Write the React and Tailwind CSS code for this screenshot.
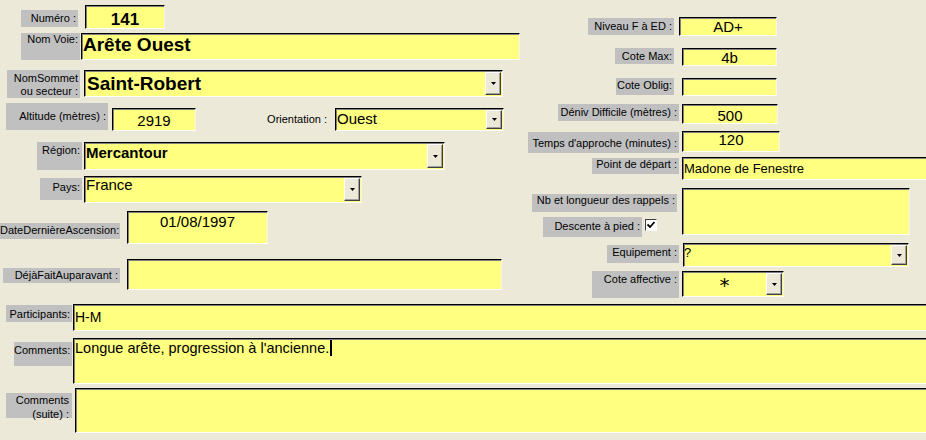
import React from 'react';

function Label({ className = '', children }) {
  return (
    <div className={`shrink-0 bg-[#c0c0c0] text-[11px] leading-[13px] text-right pr-[2px] whitespace-nowrap ${className}`}>
      {children}
    </div>
  );
}

function DropBtn() {
  return (
    <div className="shrink-0 w-[16px] self-stretch my-[1px] mr-[1px] flex items-center justify-center bg-[#ece9d8] border-t border-l border-t-white border-l-white border-b border-r border-b-[#404040] border-r-[#404040] shadow-[inset_-1px_-1px_0_#a0a0a0]">
      <svg width="5" height="3" viewBox="0 0 5 3">
        <path d="M0 0h5L2.5 3z" fill="#000" />
      </svg>
    </div>
  );
}

function Field({ className = '', text = '', combo = false, children }) {
  return (
    <div className={`shrink-0 flex bg-[#ffff80] border-t border-l border-t-black border-l-black border-b border-r border-b-white border-r-[#f4f4f4] shadow-[inset_1px_1px_0_#808080] overflow-hidden ${className}`}>
      <div className={`flex-1 min-w-0 whitespace-nowrap leading-none ${text}`}>{children}</div>
      {combo && <DropBtn />}
    </div>
  );
}

export default function App() {
  return (
    <div className="w-[926px] h-[440px] overflow-hidden bg-[#ece9d8] text-black font-['Liberation_Sans',Arial,sans-serif]">
      <div className="flex h-[300px]">
        {/* left column */}
        <div className="w-[520px] shrink-0 flex flex-col pt-[5px]">
          <div className="flex items-start h-[28px]">
            <Label className="ml-[21px] mt-[5px] w-[57px] h-[17px] pt-[2px]">Numéro :</Label>
            <Field className="ml-[7px] w-[80px] h-[24px]" text="text-center font-bold text-[17px] pt-[5px]">141</Field>
          </div>
          <div className="flex items-start h-[37px]">
            <Label className="ml-[21px] w-[59px] h-[27px] pt-0">Nom Voie:</Label>
            <Field className="ml-[1px] w-[439px] h-[27px]" text="font-bold text-[19px] pt-[1px] pl-[1px]">Arête Ouest</Field>
          </div>
          <div className="flex items-start h-[33px]">
            <Label className="ml-[7px] w-[73px] h-[28px] pt-[2px] leading-[12px]">
              NomSommet
              <br />
              ou secteur :
            </Label>
            <Field combo className="ml-[4px] w-[419px] h-[27px]" text="font-bold text-[19px] pt-[3px] pl-[2px]">Saint-Robert</Field>
          </div>
          <div className="flex items-start h-[39px]">
            <Label className="ml-[6px] w-[102px] h-[27px] pt-[7px]">Altitude (mètres) :</Label>
            <Field className="ml-[4px] mt-[5px] w-[84px] h-[23px]" text="text-center text-[15px] pt-[4px]">2919</Field>
            <div className="mt-[5px] w-[139px] h-[23px] flex items-center justify-end pr-[8px] text-[11px] whitespace-nowrap">Orientation :</div>
            <Field combo className="mt-[5px] w-[169px] h-[23px]" text="text-[15px] pt-[2px] pl-[1px]">Ouest</Field>
          </div>
          <div className="flex items-start h-[34px]">
            <Label className="ml-[37px] w-[45px] h-[28px] pt-[2px]">Région:</Label>
            <Field combo className="ml-[2px] w-[361px] h-[28px]" text="font-bold text-[15px] pt-[2px] pl-[1px]">Mercantour</Field>
          </div>
          <div className="flex items-start h-[35px]">
            <Label className="ml-[40px] mt-[2px] w-[42px] h-[22px] pt-[3px]">Pays:</Label>
            <Field combo className="ml-[2px] w-[278px] h-[27px]" text="text-[15px] pt-0 pl-[1px]">France</Field>
          </div>
          <div className="flex items-start h-[48px]">
            <Label className="mt-[12px] w-[120px] h-[16px] pt-[1px]">DateDernièreAscension:</Label>
            <Field className="ml-[7px] w-[141px] h-[33px]" text="text-center text-[15px] pt-[2px]">01/08/1997</Field>
          </div>
          <div className="flex items-start h-[41px]">
            <Label className="ml-[3px] mt-[9px] w-[117px] h-[15px] pt-[1px] leading-[12px]">DéjàFaitAuparavant :</Label>
            <Field className="ml-[7px] w-[375px] h-[31px]" />
          </div>
        </div>

        {/* right column */}
        <div className="flex-1 flex flex-col pt-[17px]">
          <div className="flex items-start h-[31px]">
            <Label className="ml-[68px] mt-[1px] w-[86px] h-[17px] pt-[2px]">Niveau F à ED :</Label>
            <Field className="ml-[5px] w-[98px] h-[19px]" text="text-center text-[15px] pt-[1px]">AD+</Field>
          </div>
          <div className="flex items-start h-[30px]">
            <Label className="ml-[95px] w-[59px] h-[16px] pt-[2px] leading-[12px]">Cote Max:</Label>
            <Field className="ml-[8px] w-[95px] h-[18px]" text="text-center text-[15px] pt-[1px]">4b</Field>
          </div>
          <div className="flex items-start h-[26px]">
            <Label className="ml-[96px] w-[58px] h-[17px] pt-[1px]">Cote Oblig:</Label>
            <Field className="ml-[8px] w-[95px] h-[18px]" />
          </div>
          <div className="flex items-start h-[27px]">
            <Label className="ml-[38px] w-[121px] h-[17px] pt-[2px]">Déniv Difficile (mètres) :</Label>
            <Field className="ml-[3px] w-[96px] h-[20px]" text="text-center text-[15px] pt-[3px]">500</Field>
          </div>
          <div className="flex items-start h-[26px]">
            <Label className="ml-[8px] mt-[1px] w-[151px] h-[21px] pt-[5px]">Temps d'approche (minutes) :</Label>
            <Field className="ml-[3px] w-[98px] h-[21px]" text="text-center text-[15px] pt-0">120</Field>
          </div>
          <div className="flex items-start h-[31px]">
            <Label className="ml-[72px] mt-[1px] w-[87px] h-[16px] pt-0">Point de départ :</Label>
            <Field className="ml-[3px] w-[260px] h-[23px]" text="text-[13px] pt-[4px] pl-[1px]">Madone de Fenestre</Field>
          </div>
          <div className="flex items-start h-[55px]">
            <div className="ml-[12px] w-[147px] shrink-0 flex flex-col">
              <Label className="mt-[6px] w-[145px] h-[18px] pt-0">Nb et longueur des rappels :</Label>
              <div className="flex items-start mt-[5px]">
                <Label className="ml-[11px] w-[99px] h-[20px] pt-[3px]">Descente à pied :</Label>
                <div className="ml-[3px] mt-[2px] w-[12px] h-[12px] shrink-0 flex items-center justify-center bg-white border-t border-l border-t-[#404040] border-l-[#404040] border-b border-r border-b-white border-r-white">
                  <svg width="8" height="8" viewBox="0 0 8 8">
                    <path d="M0.5 3.5L3 6L7.5 1" stroke="#000" strokeWidth="1.8" fill="none" />
                  </svg>
                </div>
              </div>
            </div>
            <Field className="ml-[3px] w-[228px] h-[47px]" />
          </div>
          <div className="flex items-start h-[28px]">
            <Label className="ml-[87px] mt-[2px] w-[72px] h-[18px] pt-[1px]">Equipement :</Label>
            <Field combo className="ml-[4px] w-[226px] h-[24px]" text="text-[13px] pt-[2px]">?</Field>
          </div>
          <div className="flex items-start">
            <Label className="ml-[72px] w-[87px] h-[27px] pt-[2px]">Cote affective :</Label>
            <Field combo className="ml-[3px] w-[102px] h-[26px]" text="text-center text-[20px] pt-[3px] font-['DejaVu_Sans',sans-serif] text-black">*</Field>
          </div>
        </div>
      </div>

      {/* bottom rows */}
      <div className="flex flex-col pt-[4px]">
        <div className="flex items-start h-[34px]">
          <Label className="ml-[6px] mt-[1px] w-[66px] h-[17px] pt-[3px] leading-[11px]">Participants:</Label>
          <Field className="ml-[1px] w-[870px] h-[27px]" text="text-[14px] pt-[5px] pl-[1px]">H-M</Field>
        </div>
        <div className="flex items-start h-[50px]">
          <Label className="ml-[14px] mt-[4px] w-[58px] h-[24px] pt-[2px]">Comments:</Label>
          <Field className="ml-[1px] w-[870px] h-[46px]" text="text-[14.5px] pt-[2px] pl-[1px]">
            Longue arête, progression à l'ancienne.
            <span className="inline-block align-top ml-[1px] mt-[-1px] w-[2px] h-[16px] bg-black" />
          </Field>
        </div>
        <div className="flex items-start">
          <Label className="ml-[6px] mt-[5px] w-[66px] h-[25px] pt-0 leading-[14px] pr-[3px]">
            Comments
            <br />
            (suite) :
          </Label>
          <Field className="ml-[3px] w-[870px] h-[45px]" />
        </div>
      </div>
    </div>
  );
}
